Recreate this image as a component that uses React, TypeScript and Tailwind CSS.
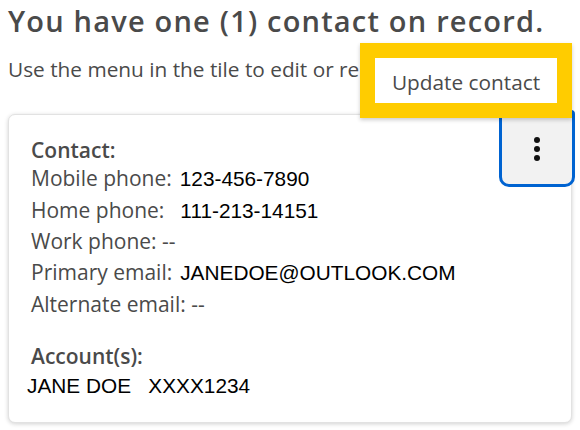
const contactRows: { label: string; value?: string; gap?: string }[] = [
  { label: 'Mobile phone:', value: '123-456-7890' },
  { label: 'Home phone:', value: '111-213-14151', gap: 'ml-[16px]' },
  { label: 'Work phone: --' },
  { label: 'Primary email:', value: 'JANEDOE@OUTLOOK.COM' },
  { label: 'Alternate email: --' },
]

function KebabButton() {
  return (
    <button
      type="button"
      aria-label="Contact menu"
      className="absolute -right-[4px] -top-[5px] flex h-[77px] w-[76px] items-center justify-center rounded-b-[10px] rounded-t-[4px] border-[3px] border-[#0063d1] bg-[#f2f2f2]"
    >
      <span className="flex flex-col items-center gap-[3px]">
        <span className="h-[6px] w-[6px] rounded-full bg-[#111]" />
        <span className="h-[6px] w-[6px] rounded-full bg-[#111]" />
        <span className="h-[6px] w-[6px] rounded-full bg-[#111]" />
      </span>
    </button>
  )
}

export default function App() {
  return (
    <div className="relative h-[430px] w-[580px] overflow-hidden bg-white px-2 font-['Open_Sans',sans-serif] text-[#4a4a4a]">
      <h1 className="pt-[1px] text-[29px] font-semibold leading-[40px] tracking-[1.2px] whitespace-nowrap">
        You have one (1) contact on record.
      </h1>
      <p className="mt-[15px] text-[20.8px] leading-[26px] whitespace-nowrap">
        Use the menu in the tile to edit or remove a contact.
      </p>

      <div className="relative mt-[32px] w-[564px] rounded-[7px] border border-[#e2e2e2] bg-white pb-[21px] pl-[22px] pt-[22px] shadow-[0_1px_4px_rgba(0,0,0,0.18)]">
        <KebabButton />

        <div className="text-[21px] font-semibold leading-[26px]">Contact:</div>
        {contactRows.map((row) => (
          <div key={row.label} className="text-[21px] leading-[30.7px] whitespace-nowrap">
            <span>{row.label}</span>
            {row.value && (
              <span className={`${row.gap ?? 'ml-[8px]'} font-['Liberation_Sans',Arial,sans-serif] text-[20.8px] text-black`}>
                {row.value}
              </span>
            )}
          </div>
        ))}

        <div className="mt-[23px] text-[21px] font-semibold leading-[26px]">Account(s):</div>
        <div className="-ml-[4px] pt-[1px] font-['Liberation_Sans',Arial,sans-serif] text-[20.8px] leading-[31px] text-black whitespace-pre">
          JANE DOE   XXXX1234
        </div>
      </div>

      {/* highlight callout that sits over the tile */}
      <div className="absolute left-[360px] top-[43px] flex h-[75px] w-[212px] items-center justify-center border-[15px] border-[#ffcc00] bg-white shadow-[0_2px_4px_rgba(0,0,0,0.2)]">
        <span className="pt-[3px] text-[20.8px] leading-none text-[#4a4a4a]">Update contact</span>
      </div>
    </div>
  )
}
